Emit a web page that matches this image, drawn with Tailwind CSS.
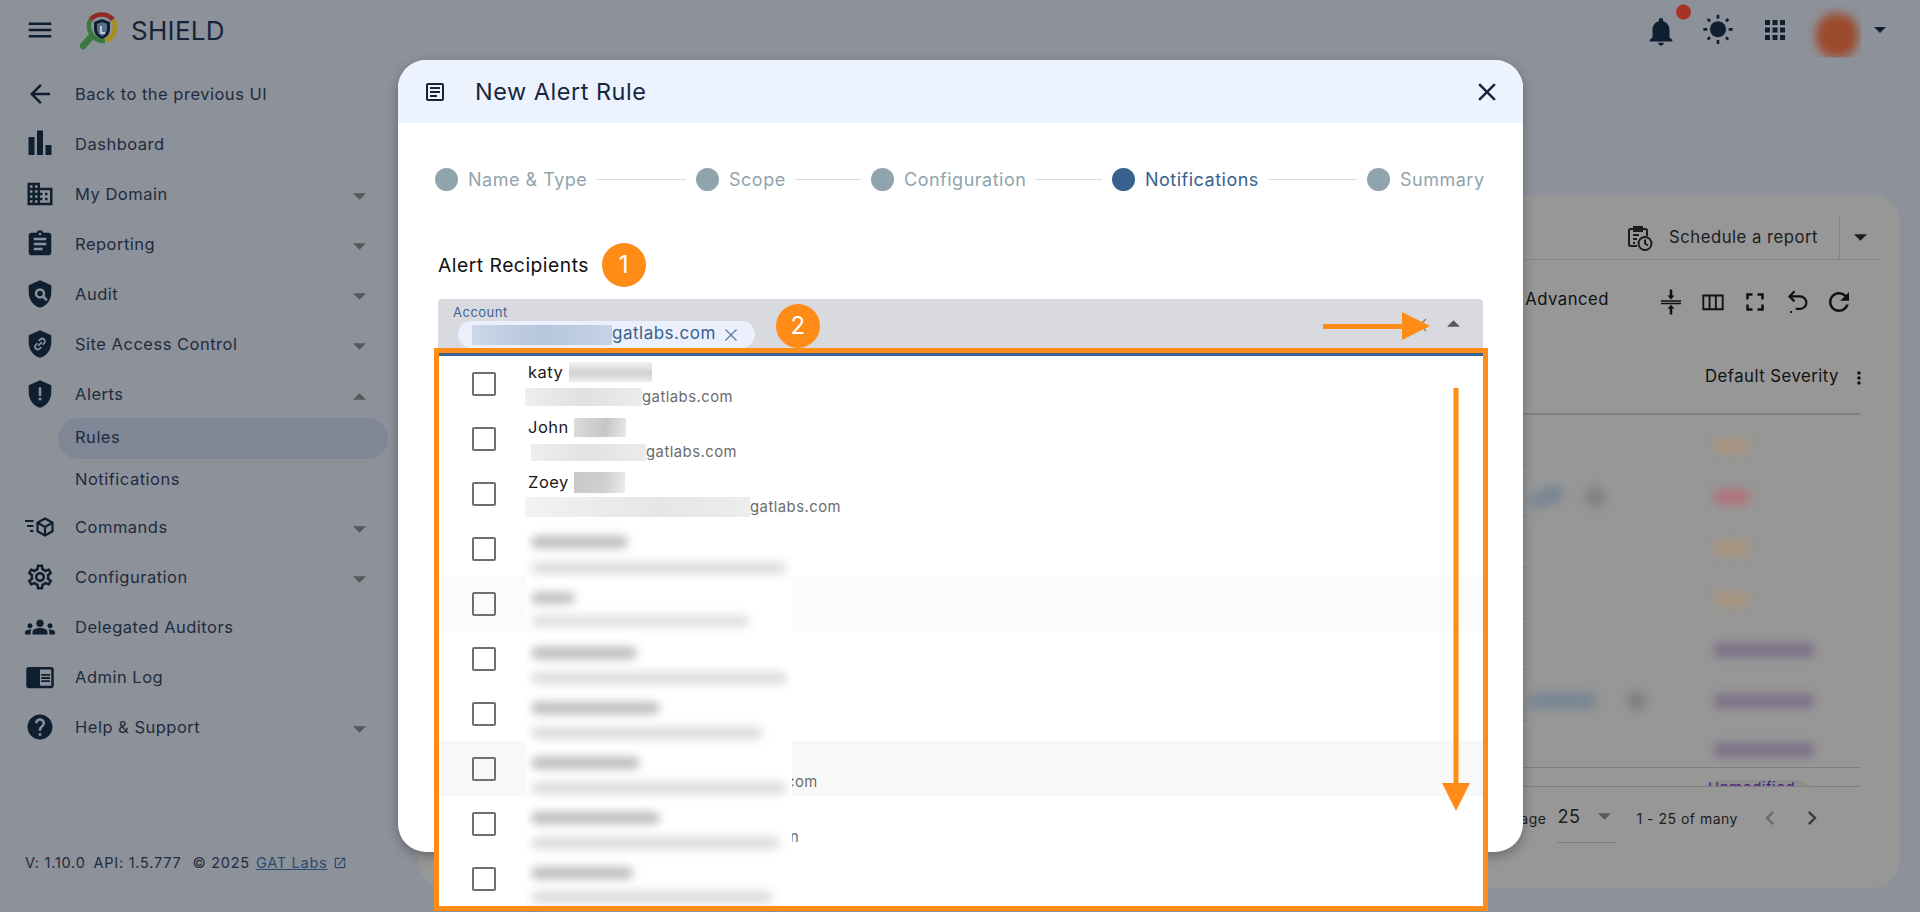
<!DOCTYPE html>
<html lang="en">
<head>
<meta charset="utf-8">
<title>SHIELD - New Alert Rule</title>
<script src="https://cdn.jsdelivr.net/npm/@tailwindcss/browser@4"></script>
</head>
<body class="relative h-[912px] w-[1920px] overflow-hidden bg-[#8d919a] font-['Inter','Liberation_Sans',sans-serif] text-[16.500px] tracking-[0.5px] text-[#1f2b3e]">

<!-- top bar -->
<header class="flex h-[60px] items-center pr-[34px]">
  <svg class="ml-[25px] h-[30px] w-[30px] fill-[#0f1f30]" viewBox="0 0 24 24"><path d="M3 18h18v-2H3v2zm0-5h18v-2H3v2zm0-7v2h18V6H3z"/></svg>
  <svg class="ml-[25px] h-[40px] w-[40px]" viewBox="0 0 40 40" fill="none">
    <path d="M10.500 9.500A15 15 0 0 1 33 9.500" stroke="#8f2a24" stroke-width="4.500"/>
    <path d="M33.500 10A15 15 0 0 1 26 30.500" stroke="#a88f16" stroke-width="4.500"/>
    <path d="M25 31A15 15 0 0 1 10.500 9.500" stroke="#38793c" stroke-width="4.500"/>
    <path d="M11 27L3 36" stroke="#38793c" stroke-width="6.500" stroke-linecap="round"/>
    <path d="M22 9l-8 3v7c0 5 3.500 8.500 8 10 4.500-1.500 8-5 8-10v-7z" fill="#0f1f30"/>
    <path d="M22 12l-5 2v5c0 3.500 2 6 5 7.200 3-1.200 5-3.700 5-7.200v-5z" fill="#56708c"/>
    <path d="M20 16h2v6h3v2h-5z" fill="#c5cbd3"/>
  </svg>
  <span class="ml-[11px] text-[26px] tracking-[0.3px] text-[#16243a]">SHIELD</span>
  <div class="ml-auto flex items-center">
    <div class="relative mr-[24px] flex translate-y-[1.500px]">
      <svg class="h-[34px] w-[34px] fill-[#0f1f30]" viewBox="0 0 24 24"><path d="M12 22c1.100 0 2-.9 2-2h-4c0 1.100.89 2 2 2zm6-6v-5c0-3.070-1.640-5.640-4.500-6.320V4c0-.83-.67-1.500-1.500-1.500s-1.500.67-1.500 1.500v.68C7.630 5.360 6 7.920 6 11v5l-2 2v1h16v-1l-2-2z"/></svg>
      <span class="absolute left-[31.500px] top-[-10px] h-[15px] w-[15px] rounded-full bg-[#a83228]"></span>
    </div>
    <svg class="h-[32px] w-[32px] fill-[#0f1f30]" viewBox="0 0 24 24"><path d="M6.760 4.840l-1.800-1.790-1.410 1.410 1.790 1.790 1.420-1.410zM4 10.500H1v2h3v-2zm9-9.950h-2V3.500h2V.55zm7.450 3.910l-1.410-1.410-1.790 1.790 1.410 1.410 1.790-1.790zm-3.210 13.700l1.790 1.800 1.410-1.410-1.800-1.790-1.400 1.400zM20 10.500v2h3v-2h-3zm-8-5c-3.310 0-6 2.690-6 6s2.690 6 6 6 6-2.690 6-6-2.690-6-6-6zm-1 16.950h2V19.500h-2v2.950zm-7.450-3.910l1.410 1.410 1.790-1.800-1.410-1.410-1.790 1.800z"/></svg>
    <svg class="ml-[26px] h-[30px] w-[30px] fill-[#0f1f30]" viewBox="0 0 24 24"><path d="M4 8h4V4H4v4zm6 12h4v-4h-4v4zm-6 0h4v-4H4v4zm0-6h4v-4H4v4zm6 0h4v-4h-4v4zm6-10v4h4V4h-4zm-6 4h4V4h-4v4zm6 6h4v-4h-4v4zm0 6h4v-4h-4v4z"/></svg>
    <div class="ml-[12px] h-[51px] w-[59px] translate-y-[1.500px] overflow-hidden bg-[#8f9097]">
      <div class="ml-[14px] mt-[7px] h-[44px] w-[42px] rounded-[45%] bg-[#9c4a2c] blur-[5px]"></div>
    </div>
    <svg class="ml-[13px] h-[6px] w-[12px] fill-[#0f1f30]" viewBox="0 0 12 6"><path d="M0 0h12L6 6z"/></svg>
  </div>
</header>

<div class="flex h-[852px]">
  <!-- sidebar -->
  <nav class="flex w-[418px] flex-col pt-[9px]">
    <div class="flex h-[50px] items-center pl-[25px]">
      <svg class="h-[30px] w-[30px] fill-[#0f1f30]" viewBox="0 0 24 24"><path d="M20 11H7.830l5.590-5.590L12 4l-8 8 8 8 1.410-1.410L7.830 13H20v-2z"/></svg>
      <span class="ml-[20px]">Back to the previous UI</span>
    </div>
    <div class="flex h-[50px] items-center pl-[25px]">
      <svg class="h-[30px] w-[30px] fill-[#0f1f30]" viewBox="0 0 30 30"><path d="M3.500 9.500h6v18h-6zM12 3h6v24.500h-6zM20.500 17.500h6v10h-6z" transform="translate(0 -1.500)"/></svg>
      <span class="ml-[20px]">Dashboard</span>
    </div>
    <div class="flex h-[50px] items-center pl-[25px] pr-[52px]">
      <svg class="h-[30px] w-[30px] fill-[#0f1f30]" viewBox="0 0 24 24"><path d="M12 7V3H2v18h20V7H12zM6 19H4v-2h2v2zm0-4H4v-2h2v2zm0-4H4V9h2v2zm0-4H4V5h2v2zm4 12H8v-2h2v2zm0-4H8v-2h2v2zm0-4H8V9h2v2zm0-4H8V5h2v2zm10 12h-8v-2h2v-2h-2v-2h2v-2h-2V9h8v10zm-2-8h-2v2h2v-2zm0 4h-2v2h2v-2z"/></svg>
      <span class="ml-[20px] flex-1">My Domain</span>
      <svg class="mt-[4px] h-[7px] w-[13px] fill-[#57585a]" viewBox="0 0 12 6"><path d="M0 0h12L6 6z"/></svg>
    </div>
    <div class="flex h-[50px] items-center pl-[25px] pr-[52px]">
      <svg class="h-[30px] w-[30px] fill-[#0f1f30]" viewBox="0 0 24 24"><path d="M19 3h-4.180C14.400 1.840 13.300 1 12 1c-1.300 0-2.400.84-2.820 2H5c-1.100 0-2 .9-2 2v14c0 1.100.9 2 2 2h14c1.100 0 2-.9 2-2V5c0-1.100-.9-2-2-2zm-7 0c.55 0 1 .45 1 1s-.45 1-1 1-1-.45-1-1 .45-1 1-1zm2 14H7v-2h7v2zm3-4H7v-2h10v2zm0-4H7V7h10v2z"/></svg>
      <span class="ml-[20px] flex-1">Reporting</span>
      <svg class="mt-[4px] h-[7px] w-[13px] fill-[#57585a]" viewBox="0 0 12 6"><path d="M0 0h12L6 6z"/></svg>
    </div>
    <div class="flex h-[50px] items-center pl-[25px] pr-[52px]">
      <svg class="h-[30px] w-[30px]" viewBox="0 0 24 24"><path fill="#0f1f30" d="M12 1L3 5v6c0 5.550 3.840 10.740 9 12 5.160-1.260 9-6.450 9-12V5l-9-4z"/><circle cx="12" cy="11.500" r="3.200" fill="none" stroke="#8d919a" stroke-width="2"/><path d="M14.500 14l3 3" stroke="#8d919a" stroke-width="2"/></svg>
      <span class="ml-[20px] flex-1">Audit</span>
      <svg class="mt-[4px] h-[7px] w-[13px] fill-[#57585a]" viewBox="0 0 12 6"><path d="M0 0h12L6 6z"/></svg>
    </div>
    <div class="flex h-[50px] items-center pl-[25px] pr-[52px]">
      <svg class="h-[30px] w-[30px]" viewBox="0 0 24 24"><path fill="#0f1f30" d="M12 1L3 5v6c0 5.550 3.840 10.740 9 12 5.160-1.260 9-6.450 9-12V5l-9-4z"/><path d="M10.500 13.500l3-3M11 9.500l1-1c1-1 2.500-1 3.300-.2.800.8.800 2.300-.2 3.300l-1 1M13 14.500l-1 1c-1 1-2.500 1-3.300.2-.8-.8-.8-2.300.2-3.300l1-1" fill="none" stroke="#8d919a" stroke-width="1.400"/></svg>
      <span class="ml-[20px] flex-1">Site Access Control</span>
      <svg class="mt-[4px] h-[7px] w-[13px] fill-[#57585a]" viewBox="0 0 12 6"><path d="M0 0h12L6 6z"/></svg>
    </div>
    <div class="flex h-[50px] items-center pl-[25px] pr-[52px]">
      <svg class="h-[30px] w-[30px]" viewBox="0 0 24 24"><path fill="#0f1f30" d="M12 1L3 5v6c0 5.550 3.840 10.740 9 12 5.160-1.260 9-6.450 9-12V5l-9-4z"/><path fill="#8d919a" d="M11 6.500h2v7h-2zM11 15h2v2h-2z"/></svg>
      <span class="ml-[20px] flex-1">Alerts</span>
      <svg class="mt-[4px] h-[7px] w-[13px] fill-[#57585a]" viewBox="0 0 12 6"><path d="M0 6h12L6 0z"/></svg>
    </div>
    <div class="-mt-px ml-[58px] flex h-[41px] w-[330px] items-center rounded-full bg-[#7f8695] pb-[2px] pl-[17px]">Rules</div>
    <div class="mb-[2px] flex h-[41px] items-center pl-[75px]">Notifications</div>
    <div class="flex h-[50px] items-center pl-[25px] pr-[52px]">
      <svg class="h-[30px] w-[30px]" viewBox="0 0 30 30"><path d="M0 9h8.500M2 14h6.500M5 19h3.500" stroke="#0f1f30" stroke-width="1.800" fill="none"/><path d="M20 6.500l7.500 4.200v8.600L20 23.500l-7.500-4.200v-8.600zM12.500 10.700L20 15l7.500-4.300M20 15v8.500" stroke="#0f1f30" stroke-width="2.200" fill="none"/></svg>
      <span class="ml-[20px] flex-1">Commands</span>
      <svg class="mt-[4px] h-[7px] w-[13px] fill-[#57585a]" viewBox="0 0 12 6"><path d="M0 0h12L6 6z"/></svg>
    </div>
    <div class="flex h-[50px] items-center pl-[25px] pr-[52px]">
      <svg class="h-[30px] w-[30px] fill-[#0f1f30]" viewBox="0 0 24 24"><path d="M19.430 12.980c.04-.32.07-.64.07-.98 0-.34-.03-.66-.07-.98l2.110-1.650c.19-.15.24-.42.12-.64l-2-3.460c-.09-.16-.26-.25-.44-.25-.06 0-.12.01-.17.03l-2.490 1c-.52-.4-1.080-.73-1.690-.98l-.38-2.650C14.460 2.180 14.250 2 14 2h-4c-.25 0-.46.18-.49.42l-.38 2.650c-.61.25-1.170.59-1.690.98l-2.490-1c-.06-.02-.12-.03-.18-.03-.17 0-.34.09-.43.25l-2 3.460c-.13.22-.07.49.12.64l2.110 1.650c-.04.32-.07.65-.07.98 0 .33.03.66.07.98l-2.110 1.650c-.19.15-.24.42-.12.64l2 3.460c.09.16.26.25.44.25.06 0 .12-.01.17-.03l2.490-1c.52.4 1.080.73 1.690.98l.38 2.650c.03.24.24.42.49.42h4c.25 0 .46-.18.49-.42l.38-2.650c.61-.25 1.170-.59 1.690-.98l2.490 1c.06.02.12.03.18.03.17 0 .34-.09.43-.25l2-3.460c.12-.22.07-.49-.12-.64l-2.110-1.650zm-1.980-1.710c.04.31.05.52.05.73 0 .21-.02.43-.05.73l-.14 1.130.89.7 1.080.84-.7 1.210-1.270-.51-1.040-.42-.9.68c-.43.32-.84.56-1.250.73l-1.060.43-.16 1.130-.2 1.350h-1.400l-.19-1.350-.16-1.130-1.060-.43c-.43-.18-.83-.41-1.230-.71l-.91-.7-1.060.43-1.270.51-.7-1.210 1.080-.84.89-.7-.14-1.130c-.03-.31-.05-.54-.05-.74s.02-.43.05-.73l.14-1.130-.89-.7-1.080-.84.7-1.210 1.270.51 1.040.42.9-.68c.43-.32.84-.56 1.250-.73l1.060-.43.16-1.130.2-1.350h1.390l.19 1.350.16 1.130 1.060.43c.43.18.83.41 1.230.71l.91.7 1.060-.43 1.270-.51.7 1.210-1.070.85-.89.7.14 1.130zM12 8c-2.210 0-4 1.790-4 4s1.790 4 4 4 4-1.790 4-4-1.790-4-4-4zm0 6c-1.100 0-2-.9-2-2s.9-2 2-2 2 .9 2 2-.9 2-2 2z"/></svg>
      <span class="ml-[20px] flex-1">Configuration</span>
      <svg class="mt-[4px] h-[7px] w-[13px] fill-[#57585a]" viewBox="0 0 12 6"><path d="M0 0h12L6 6z"/></svg>
    </div>
    <div class="flex h-[50px] items-center pl-[25px]">
      <svg class="h-[30px] w-[30px] fill-[#0f1f30]" viewBox="0 0 24 24"><path d="M12 12.750c1.630 0 3.070.39 4.240.9 1.080.48 1.760 1.560 1.760 2.730V18H6v-1.610c0-1.180.68-2.260 1.760-2.730 1.170-.52 2.610-.91 4.240-.91zM4 13c1.100 0 2-.9 2-2s-.9-2-2-2-2 .9-2 2 .9 2 2 2zm1.130 1.100C4.760 14.040 4.390 14 4 14c-.99 0-1.930.21-2.780.58C.48 14.900 0 15.620 0 16.430V18h4.500v-1.610c0-.83.23-1.610.63-2.290zM20 13c1.100 0 2-.9 2-2s-.9-2-2-2-2 .9-2 2 .9 2 2 2zm4 3.430c0-.81-.48-1.530-1.220-1.850C21.930 14.210 20.990 14 20 14c-.39 0-.76.04-1.130.1.4.68.63 1.460.63 2.290V18H24v-1.570zM12 6c1.660 0 3 1.340 3 3s-1.340 3-3 3-3-1.340-3-3 1.340-3 3-3z"/></svg>
      <span class="ml-[20px]">Delegated Auditors</span>
    </div>
    <div class="flex h-[50px] items-center pl-[25px]">
      <svg class="h-[30px] w-[30px] fill-[#0f1f30]" viewBox="0 0 24 24"><path d="M13 12h7v1.500h-7zm0-2.500h7V11h-7zm0 5h7V16h-7zM21 4H3c-1.100 0-2 .9-2 2v13c0 1.100.9 2 2 2h18c1.100 0 2-.9 2-2V6c0-1.100-.9-2-2-2zm0 15h-9V6h9v13z"/></svg>
      <span class="ml-[20px]">Admin Log</span>
    </div>
    <div class="flex h-[50px] items-center pl-[25px] pr-[52px]">
      <svg class="h-[30px] w-[30px] fill-[#0f1f30]" viewBox="0 0 24 24"><path d="M12 2C6.480 2 2 6.480 2 12s4.480 10 10 10 10-4.480 10-10S17.520 2 12 2zm1 17h-2v-2h2v2zm2.070-7.750l-.9.92C13.450 12.900 13 13.500 13 15h-2v-.5c0-1.100.45-2.100 1.170-2.830l1.240-1.260c.37-.36.59-.86.59-1.410 0-1.100-.9-2-2-2s-2 .9-2 2H8c0-2.210 1.790-4 4-4s4 1.790 4 4c0 .88-.36 1.680-.93 2.250z"/></svg>
      <span class="ml-[20px] flex-1">Help &amp; Support</span>
      <svg class="mt-[4px] h-[7px] w-[13px] fill-[#57585a]" viewBox="0 0 12 6"><path d="M0 0h12L6 6z"/></svg>
    </div>
    <div class="mb-[39px] mt-auto flex items-center pl-[25px] text-[14.500px] leading-[20px] tracking-[0.75px]">
      <span>V: 1.10.0</span><span class="ml-[8px]">API: 1.5.777</span><span class="ml-[11px]">© 2025</span>
      <a class="ml-[6px] text-[#2b4a70] underline">GAT Labs </a>
      <svg class="ml-[5px] h-[14px] w-[14px] fill-[#2b4a70]" viewBox="0 0 24 24"><path d="M19 19H5V5h7V3H5c-1.110 0-2 .9-2 2v14c0 1.100.89 2 2 2h14c1.100 0 2-.9 2-2v-7h-2v7zM14 3v2h3.590l-9.830 9.830 1.410 1.410L19 6.410V10h2V3h-7z"/></svg>
    </div>
  </nav>

  <!-- rules card, mostly behind the dialog -->
  <main class="flex-1 pr-[20px] pt-[135px]">
    <section class="h-[693px] rounded-[28px] bg-[#979797] text-[16.700px] text-[#1c1c1c]">
      <div class="mr-[20px] flex h-[65px] items-center justify-end border-b border-[#858585] pt-[21px]">
        <svg class="mr-[15px] h-[28px] w-[28px]" viewBox="0 0 28 28" fill="none" stroke="#1c1c1c" stroke-width="2"><path d="M11 22H4.500a1.500 1.500 0 0 1-1.500-1.500V6.500A1.500 1.500 0 0 1 4.500 5h15A1.500 1.500 0 0 1 21 6.500V12"/><path d="M8 3h8v4H8zM7 11h6M7 15h4M7 19h2" /><circle cx="19" cy="19.500" r="6.500"/><path d="M19 15.500v4l3 2"/></svg>
        <span>Schedule a report</span>
        <div class="ml-[21px] flex h-[44px] w-[41px] items-center justify-center border-l border-[#858585]">
          <svg class="h-[7px] w-[13px] fill-[#1c1c1c]" viewBox="0 0 12 6"><path d="M0 0h12L6 6z"/></svg>
        </div>
      </div>
      <div class="flex h-[80px] items-center justify-end pr-[46px] text-[#111]">
        <span class="mr-[47px]">Advanced</span>
        <div class="flex translate-y-[2px] gap-[12px]">
          <svg class="h-[30px] w-[30px] fill-[#111]" viewBox="0 0 24 24"><path d="M4 10.600h16v1.100H4zm0 2h16v1.100H4zM12 10L9.200 6.800H11V2h2v4.800h1.800zM12 14.200l2.800 3.200H13V22h-2v-4.600H9.200z"/></svg>
          <svg class="h-[30px] w-[30px] fill-[#111]" viewBox="0 0 24 24"><path d="M3.500 6v12.500h17V6zM8.500 17H5V7.500h3.500zm5 0H10V7.500h3.500zm5.500 0h-4V7.500h4z"/></svg>
          <svg class="h-[30px] w-[30px] fill-[#111]" viewBox="0 0 24 24"><path d="M7 14H5v5h5v-2H7v-3zm-2-4h2V7h3V5H5v5zm12 7h-3v2h5v-5h-2v3zM14 5v2h3v3h2V5h-5z"/></svg>
          <svg class="h-[30px] w-[30px]" viewBox="0 0 24 24" fill="none" stroke="#111" stroke-width="1.700"><path d="M10 3.500L6 7.500l4 4M6 7.500h8.500a5 5 0 0 1 0 10H11M6.500 20h1.500" /></svg>
          <svg class="h-[30px] w-[30px] fill-[#111]" viewBox="0 0 24 24"><path d="M17.650 6.350C16.200 4.900 14.210 4 12 4c-4.420 0-7.990 3.580-7.990 8s3.570 8 7.990 8c3.730 0 6.840-2.550 7.730-6h-2.080c-.82 2.330-3.040 4-5.650 4-3.310 0-6-2.690-6-6s2.690-6 6-6c1.660 0 3.140.69 4.220 1.780L13 11h7V4l-2.350 2.350z"/></svg>
        </div>
      </div>
      <div class="ml-auto mr-[40px] flex h-[75px] w-[420px] items-center justify-end border-b-2 border-[#808080] text-[#111]">
        <span>Default Severity</span>
        <svg class="ml-[10px] mr-[-9px] mt-[3px] h-[20px] w-[20px] fill-[#111]" viewBox="0 0 24 24"><path d="M12 8c1.100 0 2-.9 2-2s-.9-2-2-2-2 .9-2 2 .9 2 2 2zm0 2c-1.100 0-2 .9-2 2s.9 2 2 2 2-.9 2-2-.9-2-2-2zm0 6c-1.100 0-2 .9-2 2s.9 2 2 2 2-.9 2-2-.9-2-2-2z"/></svg>
      </div>
      <div class="ml-auto mr-[40px] w-[420px]">
        <div class="flex h-[51px] border-b border-[#8b8b8b]"><div class="-mb-px ml-[88px] mr-[2px] flex flex-1 items-center bg-[#979797] pl-[185px] pt-[10px]"><i class="h-[16px] w-[37px] rounded-full bg-[#a89580] blur-[5px]"></i></div></div>
        <div class="flex h-[51px] border-b border-[#8b8b8b]"><div class="-mb-px ml-[88px] mr-[2px] flex flex-1 items-center bg-[#979797] pt-[10px]"><i class="h-[18px] w-[37px] rotate-[-20deg] rounded-full bg-[#7a8793] blur-[5px]"></i><i class="ml-[20px] h-[20px] w-[20px] rounded-full bg-[#7f7f7f] blur-[5px]"></i><i class="ml-[108px] h-[16px] w-[37px] rounded-full bg-[#b0747c] blur-[5px]"></i></div></div>
        <div class="flex h-[51px] border-b border-[#8b8b8b]"><div class="-mb-px ml-[88px] mr-[2px] flex flex-1 items-center bg-[#979797] pl-[185px] pt-[10px]"><i class="h-[16px] w-[37px] rounded-full bg-[#a89580] blur-[5px]"></i></div></div>
        <div class="flex h-[51px] border-b border-[#8b8b8b]"><div class="-mb-px ml-[88px] mr-[2px] flex flex-1 items-center bg-[#979797] pl-[185px] pt-[10px]"><i class="h-[16px] w-[37px] rounded-full bg-[#a89580] blur-[5px]"></i></div></div>
        <div class="flex h-[51px] border-b border-[#8b8b8b]"><div class="-mb-px ml-[88px] mr-[2px] flex flex-1 items-center bg-[#979797] pl-[185px] pt-[10px]"><i class="h-[16px] w-[102px] rounded-full bg-[#807589] blur-[4px]"></i></div></div>
        <div class="flex h-[51px] border-b border-[#8b8b8b]"><div class="-mb-px ml-[88px] mr-[2px] flex flex-1 items-center bg-[#979797] pt-[10px]"><i class="h-[18px] w-[69px] rounded-full bg-[#7a8793] blur-[5px]"></i><i class="ml-[30px] h-[20px] w-[20px] rounded-full bg-[#7f7f7f] blur-[5px]"></i><i class="ml-[66px] h-[16px] w-[102px] rounded-full bg-[#807589] blur-[4px]"></i></div></div>
        <div class="h-[47px] overflow-hidden border-b border-[#808080]"><div class="ml-[88px] mr-[2px] flex h-[44px] items-start overflow-hidden bg-[#979797] pl-[185px] pt-[21px]"><i class="h-[16px] w-[102px] shrink-0 rounded-full bg-[#807589] blur-[4px]"></i></div></div>
        <div class="h-[19px] overflow-hidden border-b border-[#808080] pl-[260px] pt-[12px]"><div class="h-[20px] w-[115px] rounded-t-full bg-[#8f8f8f] pl-[8px] text-[15px] leading-[16px] text-[#4b1a86]">Unmodified</div></div>
      </div>
      <div class="flex h-[62px] items-center justify-end pr-[74px] text-[14px]">
        <span class="whitespace-nowrap">Rows per page</span>
        <div class="ml-[11px] flex h-[56px] w-[59px] items-center self-start border-b border-[#7f7f7f] pt-[4px] text-[18px]"><span>25</span><svg class="ml-[18px] h-[7px] w-[13px] fill-[#585858]" viewBox="0 0 12 6"><path d="M0 0h12L6 6z"/></svg></div>
        <span class="ml-[20px] whitespace-nowrap">1 - 25 of many</span>
        <svg class="ml-[18px] h-[28px] w-[28px] fill-[#6b6b6b]" viewBox="0 0 24 24"><path d="M15.410 7.410L14 6l-6 6 6 6 1.410-1.410L10.830 12z"/></svg>
        <svg class="ml-[14px] h-[28px] w-[28px] fill-[#3a3a3a]" viewBox="0 0 24 24"><path d="M10 6L8.590 7.410 13.170 12l-4.580 4.590L10 18l6-6z"/></svg>
      </div>
    </section>
  </main>
</div>

<!-- dialog -->
<div class="absolute left-[398px] top-[60px] h-[792px] w-[1125px] rounded-[28px] bg-white shadow-[0_4px_12px_rgba(0,0,0,0.3)]">
  <div class="flex h-[63px] items-center rounded-t-[28px] bg-[#ecf3fe] pl-[25px] pr-[21px] text-[#18273f]">
    <svg class="h-[24px] w-[24px] fill-[#16243a]" viewBox="0 0 24 24"><path d="M19 5v14H5V5h14m0-2H5c-1.100 0-2 .9-2 2v14c0 1.100.9 2 2 2h14c1.100 0 2-.9 2-2V5c0-1.100-.9-2-2-2z"/><path d="M14 17H7v-2h7v2zm3-4H7v-2h10v2zm0-4H7V7h10v2z"/></svg>
    <span class="ml-[28px] flex-1 text-[23.500px] tracking-[0.5px]">New Alert Rule</span>
    <svg class="h-[30px] w-[30px] fill-[#16243a]" viewBox="0 0 24 24"><path d="M19 6.410L17.590 5 12 10.590 6.410 5 5 6.410 10.590 12 5 17.590 6.410 19 12 13.410 17.590 19 19 17.590 13.410 12z"/></svg>
  </div>
  <div class="mt-[45px] flex h-[22px] items-center pl-[37px] text-[18px] text-[#90a4ae]">
    <i class="h-[23px] w-[23px] rounded-full bg-[#90a4ae]"></i><span class="ml-[10px] w-[118px] whitespace-nowrap">Name &amp; Type</span>
    <i class="ml-[11px] h-px w-[89px] bg-[#dcdfe1]"></i>
    <i class="ml-[10px] h-[23px] w-[23px] rounded-full bg-[#90a4ae]"></i><span class="ml-[10px] w-[56px]">Scope</span>
    <i class="ml-[10px] h-px w-[66px] bg-[#dcdfe1]"></i>
    <i class="ml-[10px] h-[23px] w-[23px] rounded-full bg-[#90a4ae]"></i><span class="ml-[10px] w-[119px] whitespace-nowrap">Configuration</span>
    <i class="ml-[12px] h-px w-[67px] bg-[#dcdfe1]"></i>
    <i class="ml-[10px] h-[23px] w-[23px] rounded-full bg-[#37618e]"></i><span class="ml-[10px] w-[113px] text-[#37618e]">Notifications</span>
    <i class="ml-[10px] h-px w-[89px] bg-[#dcdfe1]"></i>
    <i class="ml-[10px] h-[23px] w-[23px] rounded-full bg-[#90a4ae]"></i><span class="ml-[10px]">Summary</span>
  </div>
  <div class="ml-[40px] mt-[53px] flex h-[44px] items-center">
    <span class="text-[19.300px] text-[#111]">Alert Recipients</span>
  </div>
  <div class="ml-[40px] mt-[12px] h-[60px] w-[1045px] rounded-t-[4px] bg-[#d9dae0] pl-[15px] pt-[4px]">
    <div class="text-[13px] leading-[18px] text-[#3d6491]">Account</div>
    <div class="ml-[5px] flex h-[27px] w-[297px] items-center rounded-full bg-[#ecf0fc] pl-[14px] text-[17px] leading-[22px] text-[#37618e]">
      <i class="h-[20px] w-[140px] bg-[linear-gradient(90deg,#ccd7e8,#b5c6de_50%,#c6d3e5)]"></i><span class="mt-[-3px]">gatlabs.com</span>
      <svg class="ml-[8px] h-[14px] w-[14px]" viewBox="0 0 14 14" fill="none" stroke="#5d7c9f" stroke-width="1.300"><path d="M1.500 1.500l11 11M12.500 1.500l-11 11"/></svg>
    </div>
  </div>
</div>

<!-- open dropdown panel -->
<div class="absolute left-[434px] top-[348px] h-[563px] w-[1054px] border-[5px] border-[#ff8c17] bg-white">
  <div class="relative h-[553px] overflow-hidden border-t-[3px] border-[#37618e]">
    <div class="flex h-[55px] items-center pl-[33px]">
      <i class="h-[24px] w-[24px] rounded-[2px] border-2 border-[#6f6f6f]"></i>
      <div class="ml-[32px] mt-[2px] flex flex-col">
        <div class="flex h-[25px] items-center text-[16.500px] text-[#1a1a1a]">katy<i class="ml-[6px] h-[20px] w-[83px] bg-[linear-gradient(180deg,#f2f2f2,#d2d2d2_55%,#eeeeee)]"></i></div>
        <div class="flex h-[25px] items-center text-[14.800px] text-[#6b6b6b]"><i class="ml-[-3px] h-[18px] w-[117px] bg-[linear-gradient(90deg,#eeeeee,#e0e0e0_50%,#ececec)]"></i>gatlabs.com</div>
      </div>
    </div>
    <div class="flex h-[55px] items-center pl-[33px]">
      <i class="h-[24px] w-[24px] rounded-[2px] border-2 border-[#6f6f6f]"></i>
      <div class="ml-[32px] mt-[2px] flex flex-col">
        <div class="flex h-[25px] items-center text-[16.500px] text-[#1a1a1a]">John<i class="ml-[5px] h-[19px] w-[52px] bg-[linear-gradient(100deg,#dcdcdc,#c6c6c6_60%,#e8e8e8)]"></i></div>
        <div class="flex h-[25px] items-center text-[14.800px] text-[#6b6b6b]"><i class="ml-[3px] h-[17px] w-[115px] bg-[linear-gradient(90deg,#eeeeee,#e2e2e2_50%,#ececec)]"></i>gatlabs.com</div>
      </div>
    </div>
    <div class="flex h-[55px] items-center pl-[33px]">
      <i class="h-[24px] w-[24px] rounded-[2px] border-2 border-[#6f6f6f]"></i>
      <div class="ml-[32px] mt-[2px] flex flex-col">
        <div class="flex h-[25px] items-center text-[16.500px] text-[#1a1a1a]">Zoey<i class="ml-[5px] h-[21px] w-[51px] bg-[linear-gradient(100deg,#c8c8c8,#cfcfcf_60%,#ececec)]"></i></div>
        <div class="flex h-[25px] items-center text-[14.800px] text-[#6b6b6b]"><i class="ml-[-3px] h-[20px] w-[225px] bg-[linear-gradient(90deg,#f2f2f2,#e6e6e6_60%,#ededed)]"></i>gatlabs.com</div>
      </div>
    </div>
    <div class="flex h-[55px] items-center pl-[33px]"><i class="h-[24px] w-[24px] rounded-[2px] border-2 border-[#6f6f6f]"></i></div>
    <div class="flex h-[55px] items-center bg-[#fbfbfb] pl-[33px]"><i class="h-[24px] w-[24px] rounded-[2px] border-2 border-[#6f6f6f]"></i></div>
    <div class="flex h-[55px] items-center pl-[33px]"><i class="h-[24px] w-[24px] rounded-[2px] border-2 border-[#6f6f6f]"></i></div>
    <div class="flex h-[55px] items-center pl-[33px]"><i class="h-[24px] w-[24px] rounded-[2px] border-2 border-[#6f6f6f]"></i></div>
    <div class="flex h-[55px] items-center bg-[#f8f8f8] pl-[33px]"><i class="h-[24px] w-[24px] rounded-[2px] border-2 border-[#6f6f6f]"></i><span class="ml-[290px] mt-[27px] text-[14.800px] text-[#6b6b6b]">com</span></div>
    <div class="flex h-[55px] items-center pl-[33px]"><i class="h-[24px] w-[24px] rounded-[2px] border-2 border-[#6f6f6f]"></i><span class="ml-[294px] mt-[27px] text-[14.800px] text-[#6b6b6b]">n</span></div>
    <div class="flex h-[55px] items-center pl-[33px]"><i class="h-[24px] w-[24px] rounded-[2px] border-2 border-[#6f6f6f]"></i></div>
    <!-- redaction patch over the remaining recipients -->
    <div class="absolute left-[87px] top-[168px] h-[400px] w-[266px] overflow-hidden bg-white pl-[5px] pt-[12px]">
      <i class="block h-[12px] w-[97px] rounded-full bg-[#bbbbbb] blur-[5px]"></i><i class="mt-[14px] block h-[12px] w-[256px] rounded-full bg-[#dcdcdc] blur-[5px]"></i>
      <i class="mt-[18px] block h-[12px] w-[44px] rounded-full bg-[#bfbfbf] blur-[5px]"></i><i class="mt-[11px] block h-[12px] w-[219px] rounded-full bg-[#e0e0e0] blur-[5px]"></i>
      <i class="mt-[20px] block h-[12px] w-[106px] rounded-full bg-[#bbbbbb] blur-[5px]"></i><i class="mt-[13px] block h-[12px] w-[256px] rounded-full bg-[#dcdcdc] blur-[5px]"></i>
      <i class="mt-[18px] block h-[12px] w-[129px] rounded-full bg-[#bbbbbb] blur-[5px]"></i><i class="mt-[13px] block h-[12px] w-[232px] rounded-full bg-[#dcdcdc] blur-[5px]"></i>
      <i class="mt-[18px] block h-[12px] w-[109px] rounded-full bg-[#bbbbbb] blur-[5px]"></i><i class="mt-[13px] block h-[12px] w-[256px] rounded-full bg-[#dcdcdc] blur-[5px]"></i>
      <i class="mt-[18px] block h-[12px] w-[129px] rounded-full bg-[#bbbbbb] blur-[5px]"></i><i class="mt-[13px] block h-[12px] w-[249px] rounded-full bg-[#dcdcdc] blur-[5px]"></i>
      <i class="mt-[18px] block h-[12px] w-[102px] rounded-full bg-[#bbbbbb] blur-[5px]"></i><i class="mt-[12px] block h-[12px] w-[242px] rounded-full bg-[#dcdcdc] blur-[5px]"></i>
    </div>
  </div>
</div>

<!-- numbered callouts and arrows -->
<span class="absolute left-[602px] top-[243px] flex h-[44px] w-[44px] items-center justify-center rounded-full bg-[#ff8c17] text-[24px] text-white">1</span>
<span class="absolute left-[776px] top-[304px] flex h-[44px] w-[44px] items-center justify-center rounded-full bg-[#ff8c17] text-[24px] text-white">2</span>
<svg class="absolute left-[1410px] top-[315px] h-[20px] w-[20px]" viewBox="0 0 20 20" stroke="#777" stroke-width="1.200"><path d="M4 4l12 12M16 4L4 16"/></svg>
<svg class="absolute left-[1447px] top-[320px] h-[7px] w-[13px] fill-[#5a5a5a]" viewBox="0 0 12 6"><path d="M0 6h12L6 0z"/></svg>
<svg class="absolute left-[1323px] top-[311px] h-[30px] w-[108px]" viewBox="0 0 108 30"><path d="M0 13h79V1l28 14-28 14V18H0z" fill="#ff8c17"/></svg>
<svg class="absolute left-[1441px] top-[388px] h-[423px] w-[30px]" viewBox="0 0 30 423"><path d="M12.500 0h5v395H29l-14 28-14-28h11.500z" fill="#ff8c17"/></svg>
</body>
</html>
